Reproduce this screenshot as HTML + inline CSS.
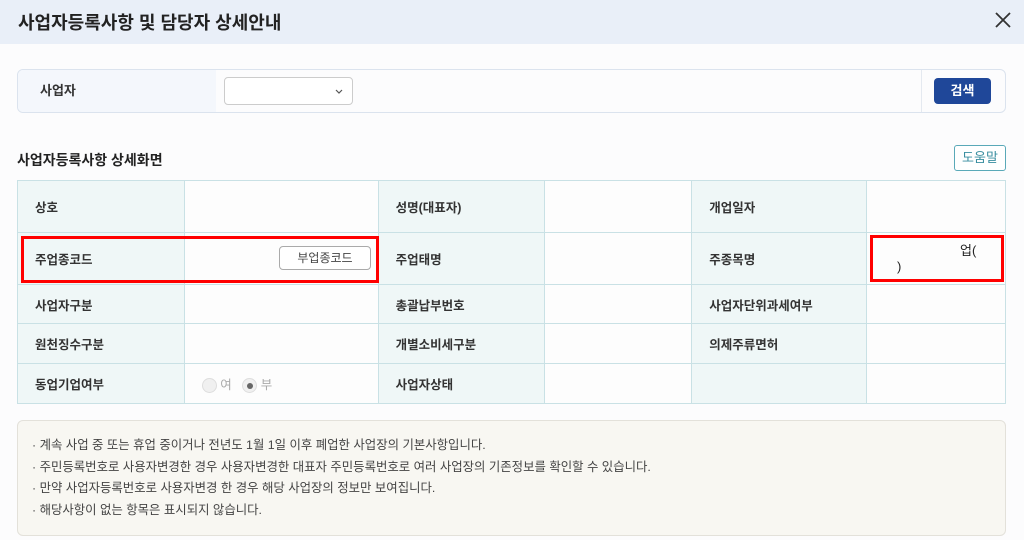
<!DOCTYPE html>
<html><head><meta charset="utf-8"><style>
*{box-sizing:border-box;margin:0;padding:0}
body{width:1024px;height:540px;overflow:hidden;background:#fcfcfd;font-family:"Liberation Sans","Noto Sans CJK KR",sans-serif;color:#222;position:relative}
.hdr{position:absolute;left:0;top:0;width:1024px;height:44px;background:#e9eff8}
.hdr h1{position:absolute;left:18px;top:9px;font-size:18px;font-weight:bold;color:#222}
.abs{position:absolute}
.search{left:17px;top:69px;width:989px;height:44px;border:1px solid #dbe3ee;border-radius:6px;background:#fcfcfd;overflow:hidden}
.search .lab{position:absolute;left:0;top:0;width:198px;height:100%;background:#f4f7fc;font-size:13px;font-weight:bold;padding:10px 0 0 22px;color:#333}
.sel{left:224px;top:77px;width:129px;height:28px;border:1px solid #ccc;border-radius:4px;background:#fff}
.btn{left:934px;top:78px;width:57px;height:26px;background:#1f4799;border-radius:4px;color:#fff;font-size:13px;font-weight:bold;text-align:center;line-height:26px}
.title{left:17px;top:150px;font-size:14px;font-weight:bold}
.help{left:954px;top:145px;width:52px;height:26px;border:1px solid #5aa9b8;border-radius:3px;color:#3a8ea0;font-size:13px;text-align:center;line-height:24px;background:#fff}
table{position:absolute;left:17px;top:180px;border-collapse:collapse;width:989px}
td{border:1px solid #c9e1e5;font-size:12.5px;padding-left:17px;background:#fdfdfd}
td.h{background:#eff7f7;font-weight:bold;color:#333}
.notes{left:17px;top:420px;width:989px;height:116px;background:#f8f7f2;border:1px solid #e3e1da;border-radius:6px;padding:14px 0 0 14px;font-size:12.4px;color:#444;line-height:21.5px}
.red{border:3px solid #f00}
.sub{left:279px;top:246px;width:92px;height:24px;border:1px solid #aaa;border-radius:4px;background:#fff;font-size:12px;color:#444;text-align:center;line-height:22px}
.radio{display:inline-block;width:15px;height:15px;border-radius:50%;border:1px solid #ddd;background:#f0f0f0;vertical-align:middle;position:relative}
</style></head><body>
<div class="hdr"><h1>사업자등록사항 및 담당자 상세안내</h1>
<svg class="abs" style="left:993px;top:10px" width="20" height="20" viewBox="0 0 20 20"><path d="M3 3L17 17M17 3L3 17" stroke="#333" stroke-width="1.8"/></svg></div>
<div class="abs search"><div class="lab">사업자</div><div style="position:absolute;left:903px;top:0;width:1px;height:100%;background:#e4e9f0"></div></div>
<div class="abs sel"><svg class="abs" style="left:110px;top:11px" width="8" height="6" viewBox="0 0 8 6"><path d="M1 1L4 4L7 1" stroke="#555" fill="none" stroke-width="1.2"/></svg></div>
<div class="abs btn">검색</div>
<div class="abs title">사업자등록사항 상세화면</div>
<div class="abs help">도움말</div>
<table>
<colgroup><col style="width:167px"><col style="width:194px"><col style="width:167px"><col style="width:147px"><col style="width:175px"><col style="width:139px"></colgroup>
<tr style="height:52px"><td class="h">상호</td><td></td><td class="h">성명(대표자)</td><td></td><td class="h">개업일자</td><td></td></tr>
<tr style="height:52px"><td class="h">주업종코드</td><td></td><td class="h">주업태명</td><td></td><td class="h">주종목명</td><td></td></tr>
<tr style="height:39px"><td class="h">사업자구분</td><td></td><td class="h">총괄납부번호</td><td></td><td class="h">사업자단위과세여부</td><td></td></tr>
<tr style="height:40px"><td class="h">원천징수구분</td><td></td><td class="h">개별소비세구분</td><td></td><td class="h">의제주류면허</td><td></td></tr>
<tr style="height:40px"><td class="h">동업기업여부</td><td style="color:#aaa"><span class="radio"></span> 여 &nbsp;&nbsp;<span class="radio"><span style="position:absolute;left:4px;top:4px;width:6px;height:6px;border-radius:50%;background:#666"></span></span> 부</td><td class="h">사업자상태</td><td></td><td class="h"></td><td></td></tr>
</table>
<div class="abs red" style="left:21px;top:236px;width:358px;height:47px"></div>
<div class="abs sub">부업종코드</div>
<div class="abs red" style="left:870px;top:235px;width:134px;height:47px"></div>
<div class="abs" style="left:960px;top:240px;font-size:13px">업(</div>
<div class="abs" style="left:897px;top:259px;font-size:13px">)</div>
<div class="abs notes">
· 계속 사업 중 또는 휴업 중이거나 전년도 1월 1일 이후 폐업한 사업장의 기본사항입니다.<br>
· 주민등록번호로 사용자변경한 경우 사용자변경한 대표자 주민등록번호로 여러 사업장의 기존정보를 확인할 수 있습니다.<br>
· 만약 사업자등록번호로 사용자변경 한 경우 해당 사업장의 정보만 보여집니다.<br>
· 해당사항이 없는 항목은 표시되지 않습니다.
</div>
</body></html>
